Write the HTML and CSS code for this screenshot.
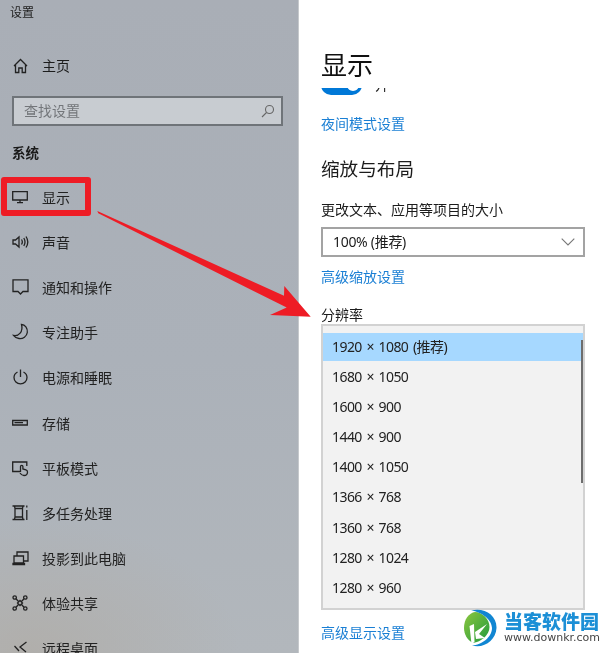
FILE: index.html
```html
<!DOCTYPE html>
<html lang="zh-CN">
<head>
<meta charset="utf-8">
<title>设置</title>
<link rel="stylesheet" href="styles.css">
</head>
<body>
<div class="window">
  <aside class="sidebar">
    <div class="app-title">设置</div>
    <div class="home-row">
      <svg class="icon" viewBox="0 0 18 18"><path d="M2 9 8.500 2.500 15 9M3.500 8V15.500H6.800V11H10.200V15.500H13.500V8"/></svg>
      <span>主页</span>
    </div>
    <div class="search">
      <span>查找设置</span>
      <svg class="search-icon" viewBox="0 0 14 14"><circle cx="8.500" cy="5.500" r="4"/><path d="M5.500 8.500 1 13"/></svg>
    </div>
    <div class="group-title">系统</div>
    <nav class="nav">
      <div class="nav-item"><svg class="icon" viewBox="0 0 18 18"><path d="M.7 3.700H15.300V12H.7ZM8 12V14.300M5 14.700H11"/></svg><span>显示</span></div>
      <div class="nav-item"><svg class="icon" viewBox="0 0 18 18"><path d="M1 7V11H3.500L7 14V4L3.500 7ZM9.500 6.500C10.500 8 10.500 10 9.500 11.500M11.800 5C13.300 7.500 13.300 10.500 11.800 13M14 3.500C16.300 7 16.300 11 14 14.500"/></svg><span>声音</span></div>
      <div class="nav-item"><svg class="icon" viewBox="0 0 18 18"><path d="M1 1.800H16V13.500H11L8.500 16 6 13.500H1Z"/></svg><span>通知和操作</span></div>
      <div class="nav-item"><svg class="icon" viewBox="0 0 18 18"><path d="M9.500 1.500C13 1.500 15.800 5 15.300 9.500 14.700 13.500 11 16 7 15.500 4.500 15.200 2.500 14 1.500 12.500 6.500 13.500 11.500 9 9.500 1.500Z"/></svg><span>专注助手</span></div>
      <div class="nav-item"><svg class="icon" viewBox="0 0 18 18"><path d="M5.500 4C3.300 5.200 2 7.200 2 9.500 2 13 4.800 15.800 8.500 15.800S15 13 15 9.500C15 7.200 13.700 5.200 11.500 4M8.500 1.500V9"/></svg><span>电源和睡眠</span></div>
      <div class="nav-item"><svg class="icon" viewBox="0 0 18 18"><path d="M.7 6.500H15.300V11H.7ZM2.500 8.700H11"/></svg><span>存储</span></div>
      <div class="nav-item"><svg class="icon" viewBox="0 0 18 18"><path d="M8 12.500H.7V3H14.800V7M8.500 13V7.500A1.200 1.200 0 0 1 10.900 7.500V10L13.900 10.800C15.100 11.200 15.500 11.800 15.500 13 15.500 15 14 16.500 12 16.500 10 16.500 9 15.500 8 14"/></svg><span>平板模式</span></div>
      <div class="nav-item"><svg class="icon" viewBox="0 0 18 18"><path d="M.5 2H12.500M.5 15.500H12.500M2.500 2 3 4.500H10.500L11 2M2.500 15.500 3 13H10.500L11 15.500M3 4.500V13M10.500 4.500V13M14.800 1.500V3.500M14.800 6V16"/></svg><span>多任务处理</span></div>
      <div class="nav-item"><svg class="icon" viewBox="0 0 18 18"><path d="M5 7V3H16V12H12M2 7H11.500V14H2ZM1 14.500H12.500V15.500H1Z"/></svg><span>投影到此电脑</span></div>
      <div class="nav-item"><svg class="icon" viewBox="0 0 18 18"><circle cx="2.700" cy="3.500" r="1.700"/><circle cx="13.300" cy="3.500" r="1.700"/><circle cx="2.700" cy="14.500" r="1.700"/><circle cx="13.300" cy="14.500" r="1.700"/><path d="M8 6.500 10.500 9 8 11.500 5.500 9ZM4 4.800 6.700 7.700M12 4.800 9.300 7.700M4 13.200 6.700 10.300M12 13.200 9.300 10.300"/></svg><span>体验共享</span></div>
      <div class="nav-item"><svg class="icon" viewBox="0 0 18 18"><path d="M14.500 3 8 8 14 13M2.500 7 7 12"/></svg><span>远程桌面</span></div>
    </nav>
  </aside>

  <main class="content">
    <h1 class="page-title">显示</h1>
    <div class="scroller">
      <div class="toggle-row">
        <span class="toggle"><span class="knob"></span></span>
        <span class="toggle-label">开</span>
      </div>
      <a class="link link-night">夜间模式设置</a>
      <h2 class="section-title">缩放与布局</h2>
      <div class="field-label">更改文本、应用等项目的大小</div>
      <div class="dropdown">
        <span>100% (推荐)</span>
        <svg class="chevron" viewBox="0 0 14 8"><path d="M.7.700 7 7 13.300.700"/></svg>
      </div>
      <a class="link link-scale">高级缩放设置</a>
      <div class="res-label">分辨率</div>
      <div class="res-list">
        <div class="res-row selected">1920 × 1080 (推荐)</div>
        <div class="res-row">1680 × 1050</div>
        <div class="res-row">1600 × 900</div>
        <div class="res-row">1440 × 900</div>
        <div class="res-row">1400 × 1050</div>
        <div class="res-row">1366 × 768</div>
        <div class="res-row">1360 × 768</div>
        <div class="res-row">1280 × 1024</div>
        <div class="res-row">1280 × 960</div>
        <div class="scrollbar"></div>
      </div>
      <a class="link link-display">高级显示设置</a>
    </div>
  </main>

  <div class="highlight"></div>
  <svg class="arrow" viewBox="0 0 600 653"><polygon points="97.300,211 284,295.700 284.300,286 310.700,316.700 270,315 286.700,307.500 98.300,213.300"/></svg>

  <div class="watermark">
    <svg class="wm-logo" viewBox="0 0 35 39">
      <defs>
        <linearGradient id="wm-green" x1="0" y1="0" x2="1" y2="1"><stop offset="0" stop-color="#8cc63f"/><stop offset="1" stop-color="#1f9a3c"/></linearGradient>
      </defs>
      <path d="M11 3C18 3 25.500 10 25.500 18 25.500 26 17 33 9 34 3 31 0 25 0 19 0 10 5 4 11 3Z" fill="url(#wm-green)"/>
      <path d="M7 1.500C20 -2 33 6 32.500 19 32 31 20 40 8 36.500 18 36 28 28 28 19 28 11 18 3 7 1.500Z" fill="#1186d2"/>
      <path d="M5.500 17 10 15 10.500 33 7.500 35ZM11 23 23 15 15 25 21 29 12 30Z" fill="#fff"/>
    </svg>
    <div class="wm-text">
      <div class="wm-name">当客软件园</div>
      <div class="wm-url">www.downkr.com</div>
    </div>
  </div>
</div>
</body>
</html>
```

FILE: styles.css
```css
* { box-sizing: border-box; }
html, body { margin: 0; padding: 0; height: 100%; overflow: hidden; background: #fff; }
body { font-family: "Noto Sans", "Noto Sans CJK SC", sans-serif; color: #1c1c1c; }

.window { position: relative; width: 600px; height: 653px; display: flex; overflow: hidden; filter: blur(.35px); }

.sidebar {
  width: 299px; height: 653px; flex: none; overflow: hidden;
  padding-top: 4px;
  border-right: 1px solid #c6c9cc;
  background:
    radial-gradient(ellipse 210px 130px at 30px 650px, rgba(176,172,166,.75), rgba(176,172,166,0)),
    linear-gradient(180deg, #a9aeb6 0%, #abb1b9 55%, #b2b7bc 100%);
}
.app-title { font-size: 12px; line-height: 18px; padding-left: 10px; color: #222; }
.home-row { display: flex; align-items: center; gap: 12px; height: 44px; margin-top: 22px; padding-left: 12px; font-size: 14px; line-height: 20px; }
.icon { width: 18px; height: 18px; flex: none; fill: none; stroke: #222; stroke-width: 1.3; }
.search { display: flex; align-items: center; justify-content: space-between; width: 271px; height: 30px; margin: 8px 0 0 12px; padding: 0 6px 3px 10px; border: 2px solid #6f7479; background: #c8ccd1; font-size: 14px; color: #73767a; }
.search-icon { width: 14px; height: 14px; margin-top: 3px; fill: none; stroke: #666; stroke-width: 1.1; }
.group-title { margin-top: 17px; padding-left: 12px; font-size: 13.500px; line-height: 20px; font-weight: 700; color: #1a1a1a; }
.nav { margin-top: 11px; }
.nav-item { display: flex; align-items: center; gap: 12px; height: 45.200px; padding-left: 12px; font-size: 14px; color: #222; }

.content { flex: 1; min-width: 0; padding: 45px 15px 0 22px; background: #fff; }
.page-title { margin: 0; font-size: 26px; line-height: 40px; height: 43px; font-weight: 400; color: #111; }
.scroller { height: 565px; overflow: hidden; }
.toggle-row { display: flex; align-items: center; gap: 13px; height: 20px; margin-top: -13px; font-size: 14px; }
.toggle { position: relative; display: block; width: 41px; height: 20px; border-radius: 10px; background: #0078d7; }
.knob { position: absolute; right: 3px; top: 4px; width: 12px; height: 12px; border-radius: 50%; background: #fff; }
.toggle-label { line-height: 20px; }
.link { display: block; font-size: 14px; line-height: 20px; color: #1a7fd4; }
.link-night { margin-top: 19px; }
.section-title { margin: 21px 0 0; font-size: 18.600px; line-height: 28px; font-weight: 400; color: #1c1c1c; }
.field-label { margin-top: 17px; font-size: 14px; line-height: 20px; }
.dropdown { display: flex; align-items: center; justify-content: space-between; width: 264px; height: 30px; margin-top: 7px; padding: 0 8px 3px 10px; border: 2px solid #a3a3a3; font-size: 14px; letter-spacing: -.3px; background: #fff; }
.chevron { width: 14px; height: 8px; margin-top: 3px; fill: none; stroke: #777; stroke-width: 1.1; }
.link-scale { margin-top: 10px; }
.res-label { margin-top: 19px; font-size: 14px; line-height: 18px; }
.res-list { position: relative; display: flex; flex-direction: column; gap: 2.100px; width: 264px; height: 286px; padding-top: 7px; border: 2px solid #d2d2d2; background: #f2f2f2; }
.res-row { height: 28px; padding-left: 9px; font-size: 14px; line-height: 27.500px; letter-spacing: -.55px; word-spacing: 1.500px; flex: none; color: #222; }
.selected { background: #a6d8ff; }
.scrollbar { position: absolute; left: 258px; top: 14px; width: 2px; height: 143px; background: #6d6d6d; }
.link-display { margin-top: 13px; }

.highlight { position: absolute; left: 1px; top: 177px; width: 90px; height: 39px; border: 6px solid #ee1c25; border-radius: 3px; }
.arrow { position: absolute; left: 0; top: 0; width: 600px; height: 653px; fill: #ee1c25; pointer-events: none; }

.watermark { position: absolute; left: 464px; top: 609px; display: flex; gap: 5px; }
.wm-logo { width: 35px; height: 39px; flex: none; }
.wm-text { display: flex; flex-direction: column; padding-top: 5px; }
.wm-name { font-size: 19px; line-height: 17px; font-weight: 900; color: #1c8fd6; white-space: nowrap; }
.wm-url { font-family: "DejaVu Sans", sans-serif; font-size: 11px; line-height: 13px; color: #444; white-space: nowrap; }
```
